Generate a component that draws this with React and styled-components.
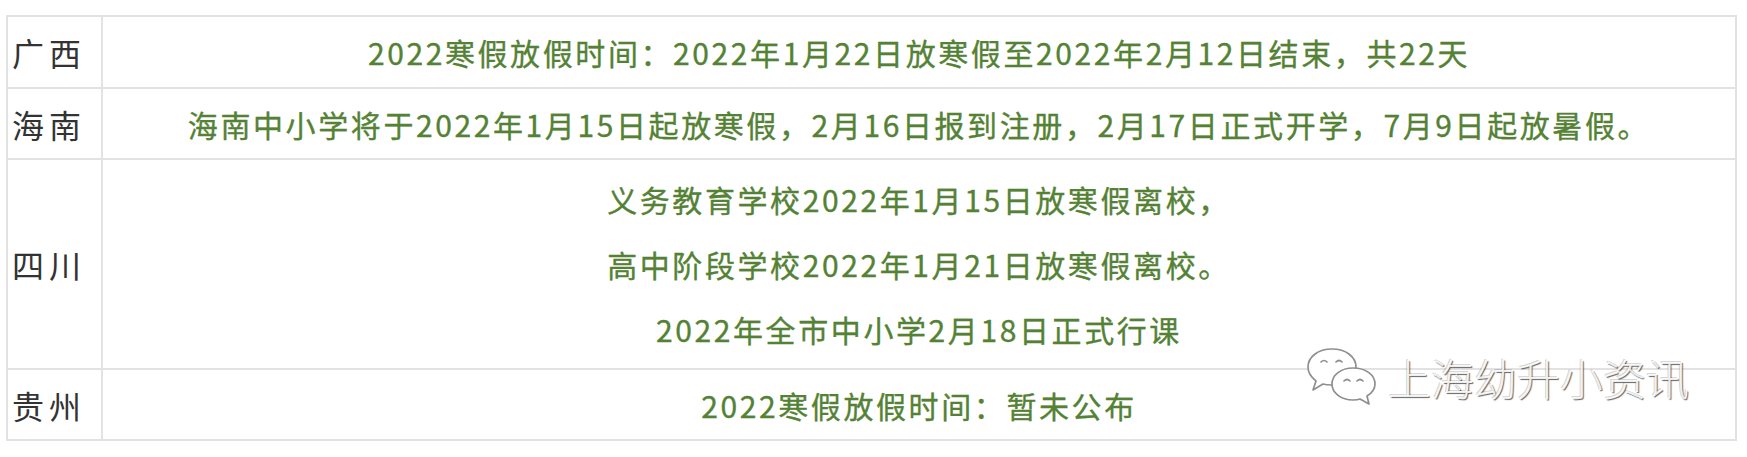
import React from "react";
import styled, { createGlobalStyle } from "styled-components";

const GREEN = "#548235";
const LINE = "#e2e2e2";

const GlobalStyle = createGlobalStyle`
  html, body {
    margin: 0;
    padding: 0;
    background: #fff;
  }
  body {
    font-family: "Noto Sans CJK SC", "Noto Sans", sans-serif;
  }
`;

const Page = styled.div`
  position: relative;
  padding: 15px 10px 0 6px;
`;

const Table = styled.table`
  width: 1731px;
  border-collapse: collapse;
  table-layout: fixed;
`;

const ProvinceCell = styled.td`
  width: 89px;
  border: 2px solid ${LINE};
  padding: 0 0 0 4px;
  font-size: 32px;
  letter-spacing: 5px;
  color: #333;
  white-space: nowrap;
  vertical-align: middle;
`;

const InfoCell = styled.td`
  height: ${(p) => p.$h}px;
  border: 2px solid ${LINE};
  padding: 0;
  text-align: center;
  vertical-align: middle;
  color: ${GREEN};
  font-size: 30px;
  letter-spacing: 2.6px;
  -webkit-text-stroke: 0.35px ${GREEN};
  white-space: nowrap;
`;

const Line = styled.div`
  line-height: 65px;
`;

const Watermark = styled.div`
  position: absolute;
  left: 1306px;
  top: 346px;
  display: flex;
  align-items: center;
  gap: 10px;
  pointer-events: none;
`;

const WatermarkText = styled.span`
  font-size: 43px;
  font-weight: 300;
  color: rgba(255, 255, 255, 0.9);
  text-shadow: 1px 1px 1px rgba(0, 0, 0, 0.6), -1px -1px 0 rgba(0, 0, 0, 0.18);
`;

function WeChatMark() {
  return (
    <svg width="72" height="62" viewBox="0 0 72 62">
      <g fill="#fff" stroke="#8f8f8f" strokeWidth="1.7" strokeLinejoin="round">
        <path d="M26 3 C12 3 2 11 2 21 C2 27 5 31 10 35 L7 44 L17 38 C20 39 23 39 26 39 C40 39 50 31 50 21 C50 11 40 3 26 3 Z" />
        <path d="M47 22 C35 22 26 29 26 38 C26 47 35 54 47 54 C50 54 52 54 54 53 L63 58 L61 50 C66 47 69 43 69 38 C69 29 60 22 47 22 Z" />
      </g>
      <g fill="none" stroke="#8f8f8f" strokeWidth="1.7" strokeLinecap="round">
        <path d="M15 16 q3 -3 6 0" />
        <path d="M30 16 q3 -3 6 0" />
        <path d="M38 35 q3 -3 6 0" />
        <path d="M51 35 q3 -3 6 0" />
      </g>
    </svg>
  );
}

const rows = [
  {
    province: "广西",
    height: 70,
    lines: ["2022寒假放假时间：2022年1月22日放寒假至2022年2月12日结束，共22天"],
  },
  {
    province: "海南",
    height: 69,
    lines: ["海南中小学将于2022年1月15日起放寒假，2月16日报到注册，2月17日正式开学，7月9日起放暑假。"],
  },
  {
    province: "四川",
    height: 208,
    lines: [
      "义务教育学校2022年1月15日放寒假离校，",
      "高中阶段学校2022年1月21日放寒假离校。",
      "2022年全市中小学2月18日正式行课",
    ],
  },
  {
    province: "贵州",
    height: 69,
    lines: ["2022寒假放假时间：暂未公布"],
  },
];

export default function App() {
  return (
    <>
      <GlobalStyle />
      <Page>
        <Table>
          <tbody>
            {rows.map((row) => (
              <tr key={row.province}>
                <ProvinceCell>{row.province}</ProvinceCell>
                <InfoCell $h={row.height}>
                  {row.lines.length > 1
                    ? row.lines.map((l) => <Line key={l}>{l}</Line>)
                    : row.lines[0]}
                </InfoCell>
              </tr>
            ))}
          </tbody>
        </Table>
        <Watermark>
          <WeChatMark />
          <WatermarkText>上海幼升小资讯</WatermarkText>
        </Watermark>
      </Page>
    </>
  );
}
